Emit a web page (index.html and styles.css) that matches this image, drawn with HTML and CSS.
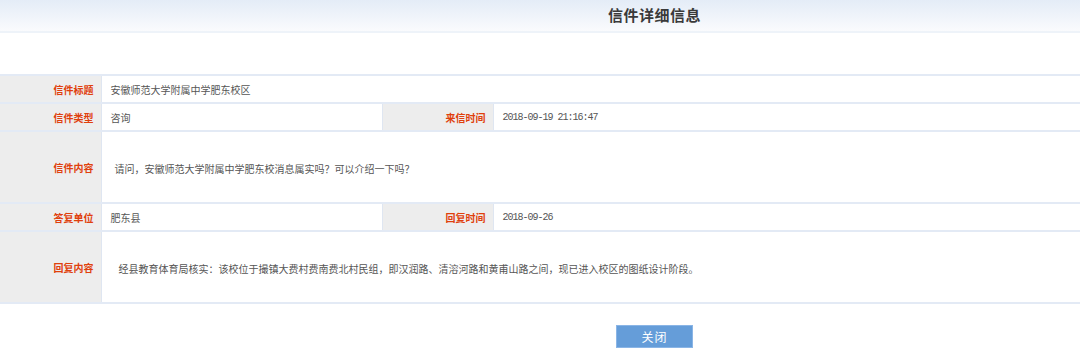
FILE: index.html
```html
<!DOCTYPE html>
<html lang="zh-CN">
<head>
    <meta charset="UTF-8">
    <title>信件详细信息</title>
    <link rel="stylesheet" href="styles.css">
</head>
<body>
    <!-- 标题栏 -->
    <div class="page-header">
        <h1 class="page-title">信件详细信息</h1>
    </div>

    <!-- 信件内容 -->
    <table class="letter-table">
        <colgroup>
            <col class="col-label">
            <col class="col-value">
            <col class="col-label2">
            <col>
        </colgroup>
        <tr class="row">
            <th>信件标题</th>
            <td colspan="3">安徽师范大学附属中学肥东校区</td>
        </tr>
        <tr class="row">
            <th>信件类型</th>
            <td>咨询</td>
            <th>来信时间</th>
            <td class="date">2018-09-19 21:16:47</td>
        </tr>
        <tr class="row row-tall">
            <th>信件内容</th>
            <td colspan="3" class="content">请问，安徽师范大学附属中学肥东校消息属实吗？可以介绍一下吗？</td>
        </tr>
        <tr class="row">
            <th>答复单位</th>
            <td>肥东县</td>
            <th>回复时间</th>
            <td class="date">2018-09-26</td>
        </tr>
        <tr class="row row-tall">
            <th>回复内容</th>
            <td colspan="3" class="content reply">经县教育体育局核实：该校位于撮镇大费村费南费北村民组，即汉润路、清溶河路和黄甫山路之间，现已进入校区的图纸设计阶段。</td>
        </tr>
    </table>

    <div class="actions">
        <button class="btn-close" onclick="window.close()">关闭</button>
    </div>
</body>
</html>
```

FILE: styles.css
```css
body {
    margin: 0;
    background: #fff;
    font-family: "Noto Sans CJK SC", "Noto Sans", sans-serif;
    color: #555;
}

.page-header {
    height: 31px;
    background: linear-gradient(#e4ecf7, #fafbfd);
    border-bottom: 2px solid #eef3f9;
}

.page-title {
    margin: 0;
    padding-left: 608px;
    line-height: 29px;
    font-size: 15px;
    font-weight: bold;
    color: #3a3a3a;
    letter-spacing: 0.5px;
}

.letter-table {
    margin-top: 41px;
    width: 100%;
    border-collapse: collapse;
    table-layout: fixed;
    font-size: 10px;
}

.col-label {
    width: 101px;
}

.col-value {
    width: 281px;
}

.col-label2 {
    width: 111px;
}

.letter-table th,
.letter-table td {
    border-top: 2px solid #e3eaf5;
    border-bottom: 2px solid #e3eaf5;
    height: 25px;
    padding: 0;
}

.letter-table th {
    background: #ededed;
    color: #e0400c;
    font-weight: bold;
    text-align: right;
    padding-right: 7px;
    border-right: 1px solid #dfe6f1;
    border-left: 1px solid #dfe6f1;
}

.letter-table th:first-child {
    border-left: none;
}

.letter-table td {
    padding-left: 9px;
    padding-top: 1px;
    color: #555;
}

.row-tall th,
.row-tall td {
    height: 68px;
}

.letter-table td.content {
    padding-left: 13px;
    padding-top: 2px;
}

.letter-table td.reply {
    padding-left: 17px;
}

.date {
    font-family: "Liberation Mono", monospace;
    letter-spacing: -1px;
}

.actions {
    padding-top: 19px;
    padding-left: 616px;
}

.btn-close {
    width: 77px;
    height: 23px;
    background: #659dd9;
    border: 1px solid #8ab5e6;
    color: #fff;
    font-family: "Noto Sans CJK SC", sans-serif;
    font-size: 12px;
    letter-spacing: 1px;
    cursor: pointer;
}
```
